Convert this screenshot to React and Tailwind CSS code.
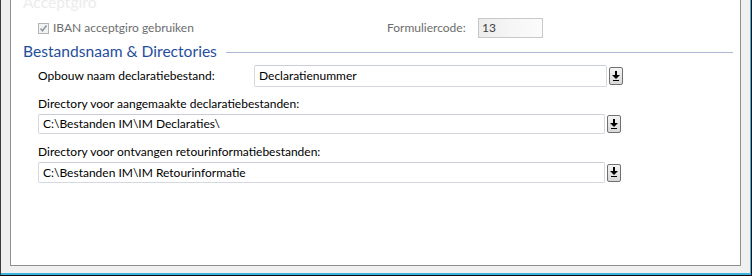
const FONT = "font-['Lato','Noto_Sans',sans-serif]";

function DropButton() {
  return (
    <div className="w-[14px] h-[18px] ml-[2px] shrink-0 rounded-[2px] border border-[#707070] bg-gradient-to-b from-[#f4f4f4] to-[#d8d8d8] flex items-center justify-center">
      <svg width="8" height="11" viewBox="0 0 8 11">
        <rect x="3" y="0" width="2" height="4" fill="#000" />
        <polygon points="0,4 8,4 4,8" fill="#000" />
        <rect x="1" y="9" width="6" height="1" fill="#000" />
      </svg>
    </div>
  );
}

function TextBox({ value, width, height = 21 }) {
  return (
    <div
      className="shrink-0 rounded-[2px] border border-[#d5d9df] border-t-[#c9ced6] bg-white pl-[4px] flex items-center text-black whitespace-nowrap overflow-hidden"
      style={{ width, height }}
    >
      {value}
    </div>
  );
}

function DisabledCheck() {
  return (
    <div className="w-[11px] h-[11px] shrink-0 border border-[#b4b4b4] bg-[#f2f2f2] flex items-center justify-center">
      <svg width="9" height="9" viewBox="0 0 9 9">
        <polyline points="1.5,4.5 3.5,6.8 7.5,1.5" fill="none" stroke="#8e98aa" strokeWidth="1.6" />
      </svg>
    </div>
  );
}

export default function App() {
  return (
    <div className={`w-[752px] h-[276px] overflow-hidden bg-[#f0f0f0] border-l border-r border-b border-l-[#3c3c3c] border-r-[#0a0a0a] border-b-[#0a0a0a] text-[12px] ${FONT}`}>
      <div className="h-full border-r border-b-2 border-[#3cb4df] pl-[9px] pr-[9px] pb-[7px] flex flex-col">
        <div className="flex-1 bg-white border-x border-b border-[#8e8f8f] overflow-hidden">
          <div className="pl-[12px] pr-[7px]">
            <div className="-mt-[8px] h-[20px] text-[15.6px] leading-[20px] text-[#ececec]">Acceptgiro</div>

            {/* IBAN row */}
            <div className="mt-[6px] h-[20px] flex items-center pl-[15px]">
              <div className="w-[349px] flex items-center">
                <DisabledCheck />
                <span className="ml-[4px] text-[#6d6d6d]">IBAN acceptgiro gebruiken</span>
              </div>
              <span className="w-[91px] text-[#6d6d6d]">Formuliercode:</span>
              <div className="w-[65px] h-[20px] border border-[#c8c8c8] bg-gradient-to-r from-[#ececec] via-[#f6f6f6] to-[#fbfbfb] pl-[3px] flex items-center text-[#404040]">
                13
              </div>
            </div>

            {/* section heading */}
            <div className="mt-[3px] h-[20px] flex items-center">
              <span className="text-[15.6px] leading-[20px] text-[#1f4e9e]">Bestandsnaam &amp; Directories</span>
              <div className="flex-1 h-px bg-[#aab8d5] ml-[9px] mt-[3px]" />
            </div>

            <div className="pl-[15px]">
              <div className="mt-[4px] flex items-center">
                <span className="w-[216px] text-black">Opbouw naam declaratiebestand:</span>
                <TextBox value="Declaratienummer" width={353} height={22} />
                <DropButton />
              </div>

              <div className="mt-[9px] h-[16px] leading-[16px] text-black">Directory voor aangemaakte declaratiebestanden:</div>
              <div className="mt-[2px] flex items-center">
                <TextBox value={"C:\\Bestanden IM\\IM Declaraties\\"} width={567} height={20} />
                <DropButton />
              </div>

              <div className="mt-[10px] h-[16px] leading-[16px] text-black">Directory voor ontvangen retourinformatiebestanden:</div>
              <div className="mt-[2px] flex items-center">
                <TextBox value={"C:\\Bestanden IM\\IM Retourinformatie"} width={567} height={21} />
                <DropButton />
              </div>
            </div>
          </div>
        </div>
      </div>
    </div>
  );
}
